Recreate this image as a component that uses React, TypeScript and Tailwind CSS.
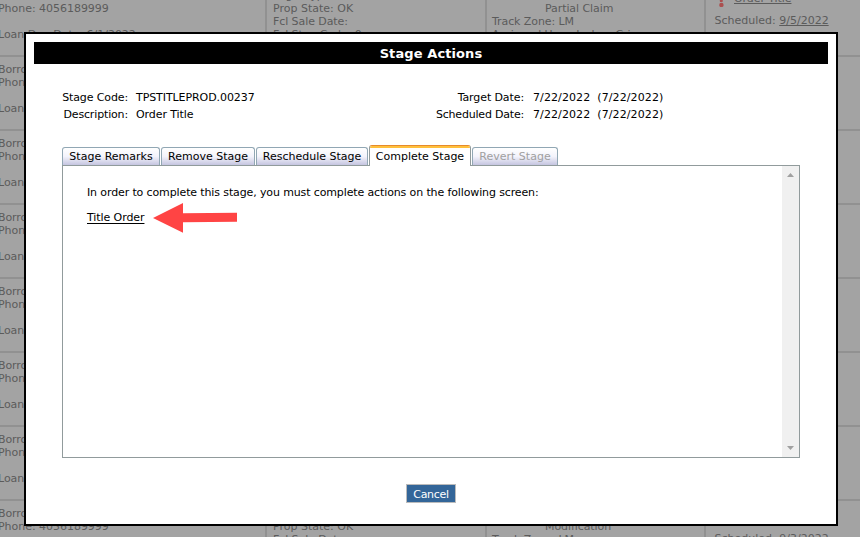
import React from 'react';

type LoanRow = { claim: string; scheduled: string };

const rows: LoanRow[] = [
  { claim: 'Partial Claim', scheduled: '9/5/2022' },
  { claim: '', scheduled: '' },
  { claim: '', scheduled: '' },
  { claim: '', scheduled: '' },
  { claim: '', scheduled: '' },
  { claim: '', scheduled: '' },
  { claim: '', scheduled: '' },
  { claim: 'Modification', scheduled: '9/3/2022' },
];

function Row({ claim, scheduled }: LoanRow) {
  return (
    <div className="flex h-[74px] shrink-0 border-t-2 border-[#919191] leading-[13px] tracking-[-0.08px]">
      <div className="w-[265px] shrink-0 pt-[6px]">
        <div className="-ml-[2px]">
          <p>Borrower: </p>
          <p className="tracking-[-0.03px]">Phone: 4056189999</p>
          <p className="mt-[13px] tracking-[-0.03px]">Loan Due Date: 6/1/2022</p>
        </div>
      </div>
      <div className="w-[220px] shrink-0 border-l-2 border-[#919191] pl-[6px] pt-[6px]">
        <p>Legal Type:</p>
        <p className="tracking-[0px]">Prop State: OK</p>
        <p>Fcl Sale Date:</p>
        <p>Fcl Step Code: 0</p>
      </div>
      <div className="w-[219px] shrink-0 border-l-2 border-[#919191] pl-[5px] pt-[19px]">
        <p className="h-[13px] pl-[53px]">{claim}</p>
        <p>Track Zone: LM</p>
        <p>Assigned User: Joshua Crim</p>
      </div>
      <div className="w-[156px] shrink-0 border-l-2 border-[#919191] pl-[8px] pt-[9px]">
        {scheduled && (
          <>
            <div className="flex h-[14px]">
              <svg className="ml-[4px] mr-[10px] mt-px h-[14px] w-[6px]" viewBox="0 0 6 14" fill="#ab4f4f">
                <path d="M1 0h4.6L4.6 9H2z" />
                <circle cx="3.4" cy="12" r="2.2" />
              </svg>
              <span className="underline">Order Title</span>
            </div>
            <p className="mt-[8px] pl-[0.5px] tracking-[0px]">
              Scheduled: <span className="underline">{scheduled}</span>
            </p>
          </>
        )}
      </div>
    </div>
  );
}

function Tab({ label, kind, size }: { label: string; kind?: 'active' | 'disabled'; size: string }) {
  if (kind === 'active') {
    return (
      <div className={`${size} z-10 -mb-px h-[21px] overflow-hidden rounded-t-[3px] border border-b-0 border-x-[#919b9c] border-t-[#e68b2c] bg-white`}>
        <div className="h-[2px] bg-[#ffc03c]" />
        <div className="text-center leading-[17px]">{label}</div>
      </div>
    );
  }
  return (
    <div
      className={`${size} h-[18px] rounded-t-[3px] border border-b-0 border-[#91a7b4] bg-linear-to-b from-white via-[#f3f3fb] to-[#c5c5e0] text-center leading-[17px] ${kind === 'disabled' ? 'text-[#a0a0a0]' : 'text-black'}`}
    >
      {label}
    </div>
  );
}

function Arrow() {
  return (
    <svg className="h-[32px] w-[86px]" viewBox="0 0 86 32" fill="#ff4444">
      <path d="M0 16 30 1V11.2L84 10.8V19.8L30 20.2V30.8Z" />
    </svg>
  );
}

export default function App() {
  return (
    <div className="relative h-[537px] w-[860px] overflow-hidden bg-[#a3a3a3] font-['Verdana','DejaVu_Sans',sans-serif] text-[11px] whitespace-nowrap">
      <div className="-mt-[19px] flex flex-col text-[#5b5b5b]">
        {rows.map((r, i) => (
          <Row key={i} {...r} />
        ))}
      </div>

      <div className="absolute left-[24px] top-[32px] flex h-[494px] w-[814px] flex-col border-2 border-black bg-white p-[8px] text-black">
        <h1 className="h-[22px] bg-black pt-px text-center text-[13px] leading-[22px] font-bold tracking-[0.1px] text-white">Stage Actions</h1>

        <div className="mt-[25px] flex pl-[28px] leading-[17px]">
          <div className="flex w-[66px] flex-col items-end">
            <p className="tracking-[-0.12px]">Stage Code:</p>
            <p className="tracking-[-0.15px]">Description:</p>
          </div>
          <div className="ml-[8px] w-[291px] tracking-[-0.08px]">
            <p>TPSTITLEPROD.00237</p>
            <p>Order Title</p>
          </div>
          <div className="flex w-[97px] flex-col items-end">
            <p className="tracking-[-0.1px]">Target Date:</p>
            <p className="tracking-[-0.2px]">Scheduled Date:</p>
          </div>
          <div className="ml-[9px] tracking-[0.1px]">
            <p className="flex gap-[7px]"><span>7/22/2022</span><span>(7/22/2022)</span></p>
            <p className="flex gap-[7px]"><span>7/22/2022</span><span>(7/22/2022)</span></p>
          </div>
        </div>

        <div className="mx-[28px] mt-[22px] flex h-[20px] items-end gap-px">
          <Tab label="Stage Remarks" size="w-[98px]" />
          <Tab label="Remove Stage" size="w-[94px]" />
          <Tab label="Reschedule Stage" size="w-[112px]" />
          <Tab label="Complete Stage" kind="active" size="w-[102px]" />
          <Tab label="Revert Stage" kind="disabled" size="w-[86px]" />
        </div>
        <div className="mx-[28px] flex h-[293px] justify-between border border-[#919b9c]">
          <div className="pl-[24px] pt-[20px]">
            <p className="leading-[14px] tracking-[-0.125px]">In order to complete this stage, you must complete actions on the following screen:</p>
            <div className="mt-[2px] flex h-[32px] items-center">
              <a className="w-[66px] pt-px tracking-[-0.08px] underline underline-offset-2">Title Order</a>
              <Arrow />
            </div>
          </div>
          <div className="flex w-[17px] flex-col items-center justify-between bg-[#f0f0f0] py-[7px]">
            <svg className="h-[4px] w-[7px]" viewBox="0 0 7 4" fill="#a0a0a0"><path d="M0 4 3.5 0 7 4z" /></svg>
            <svg className="h-[4px] w-[7px]" viewBox="0 0 7 4" fill="#a0a0a0"><path d="M0 0h7L3.5 4z" /></svg>
          </div>
        </div>

        <button className="mt-[26px] h-[19px] w-[50px] self-center border border-[#bbbbbb] bg-[#336699] pt-px text-center leading-[17px] tracking-[-0.3px] text-white">Cancel</button>
      </div>
    </div>
  );
}
